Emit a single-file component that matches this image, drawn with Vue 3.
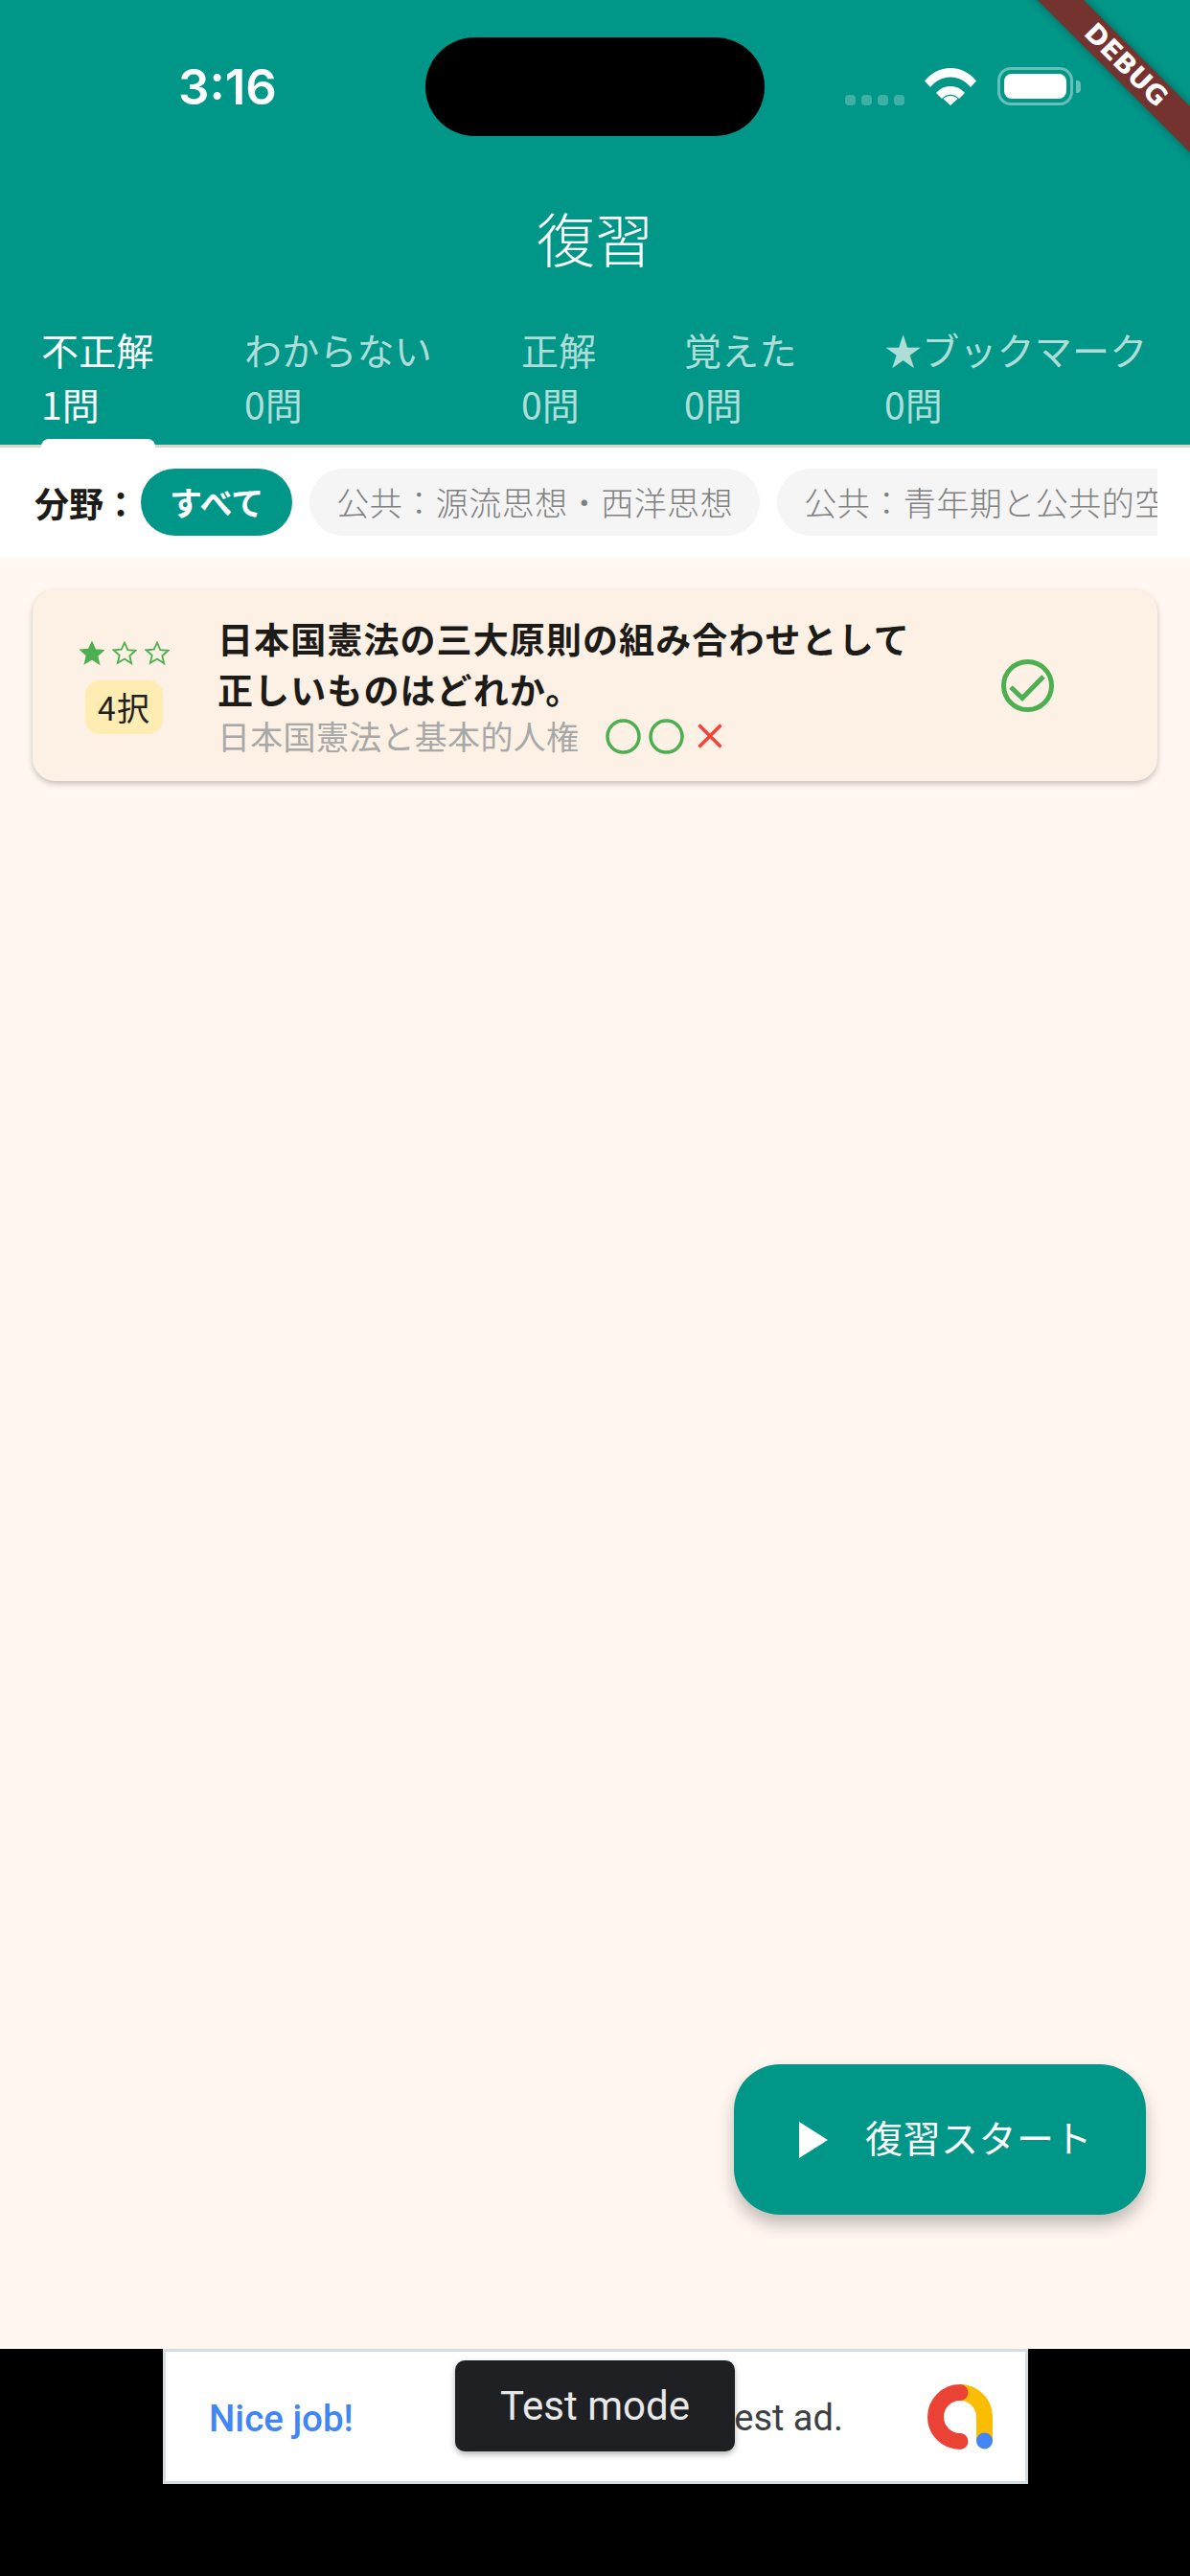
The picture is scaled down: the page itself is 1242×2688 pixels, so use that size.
<template>
  <div class="screen">
    <header class="appbar">
      <div class="status">
        <span class="time">3:16</span>
        <div class="island"></div>
        <div class="status-right">
          <div class="signal"><i></i><i></i><i></i><i></i></div>
          <svg class="wifi" width="54" height="40" viewBox="0 0 54 40">
            <path d="M0 14.500C7 6 16.500 1 27 1s20 5 27 13.500l-6 6.500C42.500 14.500 35 10.500 27 10.500S11.500 14.500 6 21z" fill="#fff" />
            <path d="M12 27c4-4.500 9-7 15-7s11 2.500 15 7l-6 6c-2.500-2.800-5.500-4.300-9-4.300s-6.500 1.500-9 4.300z" fill="#fff" />
            <path d="M19.500 33c2-2 4.500-3 7.500-3s5.500 1 7.500 3L27 40z" fill="#fff" />
          </svg>
          <div class="battery"><div class="battery-fill"></div></div>
          <div class="battery-cap"></div>
        </div>
      </div>
      <div class="title">復習</div>
      <nav class="tabs">
        <div
          v-for="(tab, i) in tabs"
          :key="tab.label"
          class="tab"
          :class="{ active: i === 0 }"
          :style="{ width: tab.width + 'px' }"
        >
          <span class="tab-label">{{ tab.label }}</span>
          <span class="tab-count">{{ tab.count }}問</span>
        </div>
      </nav>
    </header>

    <div class="filter">
      <span class="filter-label">分野：</span>
      <div class="chips">
        <span class="chip selected">すべて</span>
        <span class="chip">公共：源流思想・西洋思想</span>
        <span class="chip">公共：青年期と公共的空間</span>
      </div>
    </div>

    <main class="list">
      <div class="card">
        <div class="card-left">
          <div class="stars">
            <svg v-for="n in 3" :key="n" width="26" height="26" viewBox="0 0 26 26">
              <path
                d="M13 1.500l3.300 7.600 8.200.7-6.200 5.400 1.900 8.100L13 18.500l-7.200 4.300 1.900-8.100-6.200-5.400 8.200-.7z"
                :fill="n === 1 ? '#4caf50' : 'none'"
                stroke="#4caf50"
                stroke-width="1.800"
              />
            </svg>
          </div>
          <span class="badge">4択</span>
        </div>
        <div class="card-body">
          <div class="question">日本国憲法の三大原則の組み合わせとして<br />正しいものはどれか。</div>
          <div class="meta">
            <span class="topic">日本国憲法と基本的人権</span>
            <div class="marks">
              <svg width="37" height="37" viewBox="0 0 37 37"><circle cx="18.500" cy="18.500" r="16.500" fill="none" stroke="#4caf50" stroke-width="3.500" /></svg>
              <svg width="37" height="37" viewBox="0 0 37 37"><circle cx="18.500" cy="18.500" r="16.500" fill="none" stroke="#4caf50" stroke-width="3.500" /></svg>
              <svg class="cross" width="26" height="26" viewBox="0 0 26 26"><path d="M1.500 1.500l23 23M24.500 1.500l-23 23" fill="none" stroke="#f44336" stroke-width="3.500" /></svg>
            </div>
          </div>
        </div>
        <svg class="check" width="55" height="55" viewBox="0 0 55 55">
          <circle cx="27.500" cy="27.500" r="25" fill="none" stroke="#4caf50" stroke-width="5" />
          <path d="M10 29l12 11.500L44 18" fill="none" stroke="#4caf50" stroke-width="5" />
        </svg>
      </div>

      <button class="fab">
        <svg width="30" height="38" viewBox="0 0 30 38"><path d="M0 0l30 19L0 38z" fill="#fff" /></svg>
        <span class="fab-text">復習スタート</span>
      </button>
    </main>

    <footer class="adbar">
      <div class="ad">
        <span class="ad-nice">Nice job!</span>
        <span class="ad-text">This is a test ad.</span>
        <svg class="ad-logo" width="68" height="68" viewBox="0 0 68 68">
          <path d="M34 8.500A25.500 25.500 0 0 1 59.500 34V59" fill="none" stroke="#fbbc04" stroke-width="17" />
          <path d="M34 8.500A25.500 25.500 0 0 0 34 59.500" fill="none" stroke="#ea4335" stroke-width="17" stroke-linecap="round" />
          <circle cx="59.500" cy="59" r="8.500" fill="#4285f4" />
        </svg>
      </div>
      <div class="toast">Test mode</div>
    </footer>

    <div class="ribbon">DEBUG</div>
  </div>
</template>

<script setup>
const tabs = [
  { label: "不正解", count: 1, width: 212 },
  { label: "わからない", count: 0, width: 289 },
  { label: "正解", count: 0, width: 170 },
  { label: "覚えた", count: 0, width: 209 },
  { label: "★ブックマーク", count: 0, width: 319 },
];
</script>

<style scoped>
.screen {
  position: relative;
  display: flex;
  flex-direction: column;
  width: 1242px;
  height: 2688px;
  overflow: hidden;
  background: #fff7f0;
  font-family: "Noto Sans CJK JP", "Noto Sans", sans-serif;
}

/* app bar */
.appbar {
  flex: none;
  height: 464px;
  display: flex;
  flex-direction: column;
  background: #009688;
  color: #fff;
  border-bottom: 3px solid #ddd5c6;
  box-sizing: content-box;
}
.status {
  position: relative;
  height: 180px;
  flex: none;
}
.time {
  position: absolute;
  left: 186px;
  top: 61px;
  font: 600 51px/60px Inter, sans-serif;
}
.island {
  position: absolute;
  left: 444px;
  top: 39px;
  width: 354px;
  height: 103px;
  border-radius: 52px;
  background: #000;
}
.status-right {
  position: absolute;
  left: 882px;
  top: 70px;
  display: flex;
  align-items: flex-start;
}
.signal {
  display: flex;
  gap: 6px;
  margin-top: 29px;
  margin-right: 21px;
}
.signal i {
  width: 11px;
  height: 11px;
  border-radius: 4px;
  background: rgba(255, 255, 255, 0.25);
}
.battery {
  box-sizing: border-box;
  width: 79px;
  height: 40px;
  margin-left: 22px;
  padding: 4px;
  border: 3px solid rgba(255, 255, 255, 0.4);
  border-radius: 14px;
}
.battery-fill {
  height: 100%;
  border-radius: 8px;
  background: #fff;
}
.battery-cap {
  width: 5px;
  height: 13px;
  margin: 14px 0 0 3px;
  border-radius: 0 4px 4px 0;
  background: rgba(255, 255, 255, 0.4);
}
.title {
  flex: none;
  height: 140px;
  text-align: center;
  font-size: 61px;
  font-weight: 300;
  line-height: 136px;
}
.tabs {
  display: flex;
  padding-left: 8px;
}
.tab {
  position: relative;
  flex: none;
  box-sizing: border-box;
  height: 144px;
  padding: 16px 0 0 35px;
  display: flex;
  flex-direction: column;
  color: rgba(255, 255, 255, 0.7);
  font-size: 39px;
  line-height: 57px;
  letter-spacing: 0.2px;
}
.tab.active {
  color: #fff;
}
.tab.active::after {
  content: "";
  position: absolute;
  left: 35px;
  bottom: -3px;
  width: 119px;
  height: 9px;
  border-radius: 8px 8px 0 0;
  background: #fff;
}
.tab-label,
.tab-count {
  white-space: nowrap;
}

/* filter row */
.filter {
  flex: none;
  box-sizing: border-box;
  height: 115px;
  display: flex;
  align-items: flex-start;
  padding: 22px 34px 0 36px;
  background: #fff;
}
.filter-label {
  flex: none;
  width: 111px;
  font-size: 36px;
  font-weight: 700;
  line-height: 70px;
  color: #1c1b17;
}
.chips {
  display: flex;
  gap: 18px;
  overflow: hidden;
  min-width: 0;
  flex: 1;
}
.chip {
  flex: none;
  height: 70px;
  padding: 0 28px;
  border-radius: 35px;
  background: #f5f5f5;
  color: #808080;
  font-size: 34px;
  font-weight: 300;
  line-height: 70px;
  white-space: nowrap;
  letter-spacing: 0.5px;
}
.chip.selected {
  padding: 0 30px;
  background: #009688;
  color: #fff;
  font-weight: 700;
  letter-spacing: 0;
}

/* list */
.list {
  position: relative;
  flex: 1;
  min-height: 0;
  padding: 33px 34px 0;
}
.card {
  display: flex;
  align-items: center;
  height: 200px;
  padding: 0 0 0 48px;
  border-radius: 24px;
  background: #fcf1e4;
  box-shadow: 0 3px 6px rgba(0, 0, 0, 0.22);
}
.card-left {
  flex: none;
  width: 95px;
  margin-top: 5px;
  display: flex;
  flex-direction: column;
  align-items: center;
  gap: 15px;
}
.stars {
  display: flex;
  gap: 8px;
}
.stars svg {
  display: block;
}
.badge {
  width: 81px;
  height: 56px;
  border-radius: 15px;
  background: #ffecb3;
  color: #212121;
  font-size: 34px;
  line-height: 56px;
  letter-spacing: 1px;
  text-align: center;
}
.card-body {
  flex: 1;
  margin-left: 50px;
}
.question {
  font-size: 37px;
  font-weight: 700;
  line-height: 53px;
  color: #1c1b17;
  letter-spacing: 1.1px;
}
.meta {
  display: flex;
  align-items: center;
  height: 44px;
}
.topic {
  font-size: 34px;
  line-height: 44px;
  color: #a8a8a8;
  letter-spacing: 0.3px;
}
.marks {
  display: flex;
  align-items: center;
  gap: 8px;
  margin-left: 28px;
}
.cross {
  margin-left: 6px;
}
.check {
  flex: none;
  margin-right: 108px;
}
.fab {
  position: absolute;
  right: 46px;
  bottom: 140px;
  box-sizing: border-box;
  width: 430px;
  height: 157px;
  display: flex;
  align-items: center;
  gap: 39px;
  padding: 0 0 0 68px;
  border: none;
  border-radius: 48px;
  background: #009688;
  color: #fff;
  font-family: inherit;
  font-size: 39px;
  letter-spacing: 0.5px;
  box-shadow: 0 10px 18px rgba(0, 0, 0, 0.25);
}
.fab-text {
  margin-bottom: 8px;
}

/* ad */
.adbar {
  position: relative;
  flex: none;
  height: 237px;
  background: #000;
}
.ad {
  position: relative;
  box-sizing: border-box;
  width: 903px;
  height: 141px;
  margin-left: 170px;
  padding-top: 3px;
  display: flex;
  align-items: center;
  background: #fff;
  border: 3px solid #d5dde3;
  font-family: Roboto, sans-serif;
}
.ad-nice {
  position: absolute;
  left: 45px;
  color: #4285f4;
  font-size: 38.500px;
  font-weight: 500;
}
.ad-text {
  position: absolute;
  right: 190px;
  color: #3c4043;
  font-size: 38px;
}
.ad-logo {
  position: absolute;
  left: 795px;
  top: 34px;
}
.toast {
  position: absolute;
  left: 475px;
  top: 12px;
  width: 292px;
  height: 95px;
  border-radius: 10px;
  background: #1f2024;
  box-shadow: 0 3px 6px rgba(0, 0, 0, 0.3);
  color: #e8e8e8;
  font: 400 42px/95px Roboto, sans-serif;
  text-align: center;
}
.ribbon {
  position: absolute;
  left: 1025px;
  top: 51px;
  width: 300px;
  height: 34px;
  transform: rotate(45deg);
  background: #75332f;
  box-shadow: 0 0 8px rgba(0, 0, 0, 0.35);
  color: #fff;
  font: 700 28px/34px "DejaVu Sans", sans-serif;
  text-align: center;
}
</style>
